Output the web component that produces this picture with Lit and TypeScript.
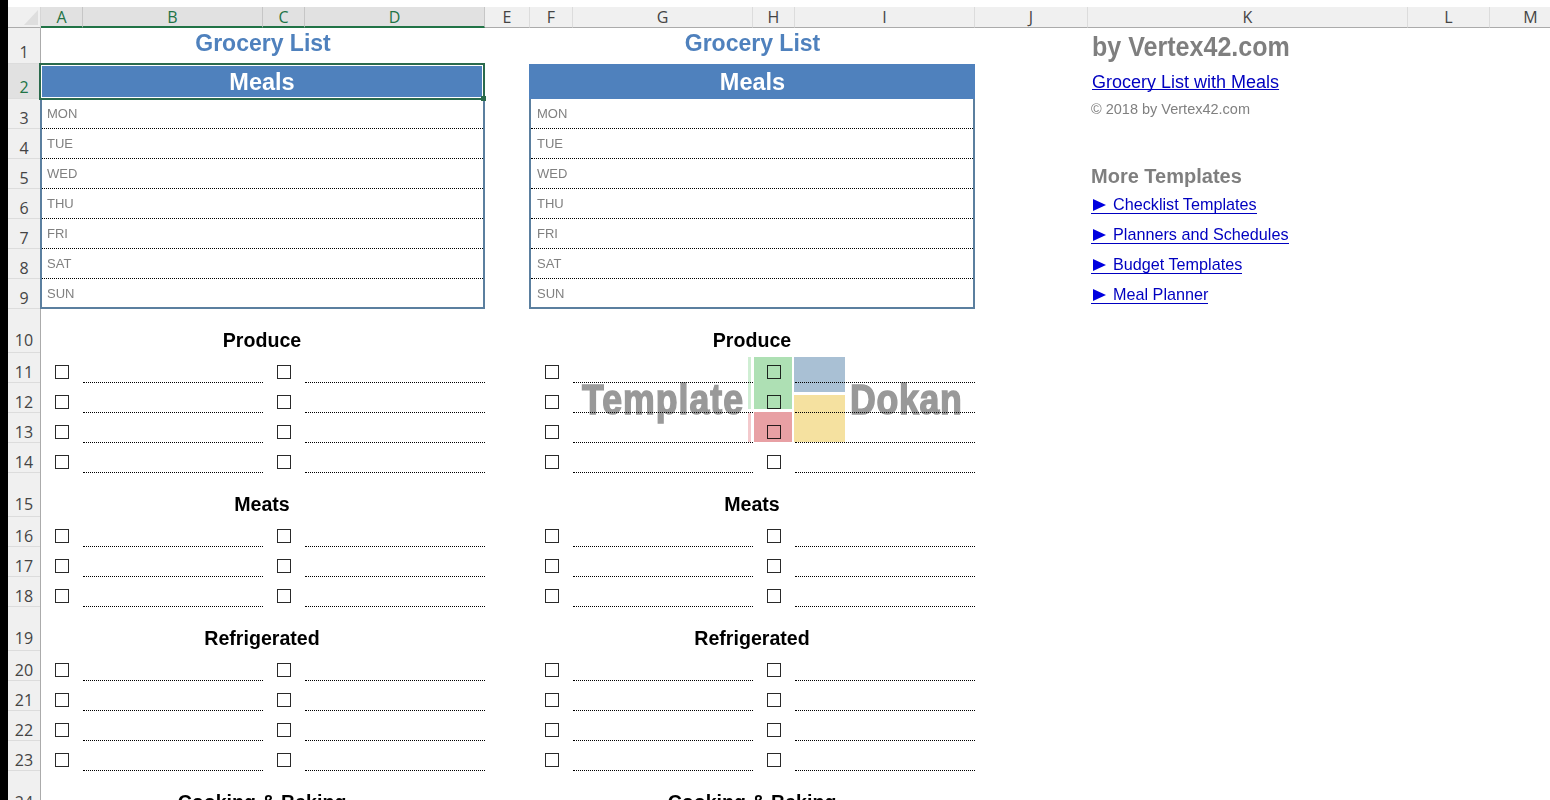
import { LitElement, html, css } from "lit";
import { customElement } from "lit/decorators.js";

const COLUMNS: [string, number, boolean][] = [
  ["A", 42, true], ["B", 180, true], ["C", 42, true], ["D", 180, true],
  ["E", 45, false], ["F", 43, false], ["G", 180, false], ["H", 42, false],
  ["I", 180, false], ["J", 113, false], ["K", 320, false], ["L", 82, false], ["M", 82, false],
];
const ROW_HEIGHTS = [36, 35, 30, 30, 30, 30, 30, 30, 30, 44, 30, 30, 30, 30, 44, 30, 30, 30, 44, 30, 30, 30, 30, 44];
const DAYS = ["MON", "TUE", "WED", "THU", "FRI", "SAT", "SUN"];
const SECTIONS: [string, number][] = [["Produce", 4], ["Meats", 3], ["Refrigerated", 4], ["Cooking & Baking", 0]];
const LINKS = ["Checklist Templates", "Planners and Schedules", "Budget Templates", "Meal Planner"];

@customElement("app-root")
export class AppRoot extends LitElement {
  static styles = css`
    :host { display: block; width: 1550px; height: 800px; overflow: hidden; background: #fff; font-family: "Liberation Sans", Arial, sans-serif; }
    .window { display: flex; height: 800px; }
    .strip { width: 8px; flex: none; background: #000; }
    .main { flex: 1; min-width: 0; padding-top: 7px; overflow: hidden; }
    .colbar { display: flex; height: 21px; }
    .corner { width: 33px; flex: none; background: #f0f0f0; border-right: 1px solid #d6d6d6; border-bottom: 1px solid #ababab; box-sizing: border-box; position: relative; }
    .corner svg { display: block; position: absolute; right: 2px; bottom: 2px; }
    .col { flex: none; box-sizing: border-box; background: #f0f0f0; border-right: 1px solid #dcdcdc; border-bottom: 1px solid #ababab; color: #444; font: 16px/20px "Open Sans", "Liberation Sans", sans-serif; text-align: center; }
    .col.sel { background: #e1e1e1; border-right-color: #c6c6c6; border-bottom: 2px solid #217346; color: #217346; }
    .body { display: flex; }
    .rowbar { width: 33px; flex: none; background: #f0f0f0; border-right: 1px solid #ababab; box-sizing: border-box; display: flex; flex-direction: column; position: relative; z-index: 0; }
    .rownum { flex: none; box-sizing: border-box; border-bottom: 1px solid #dcdcdc; color: #444; font: 16px/20px "Open Sans", "Liberation Sans", sans-serif; text-align: center; display: flex; align-items: flex-end; justify-content: center; }
    .rownum.sel { background: #e1e1e1; color: #217346; }
    .sheet { display: flex; position: relative; z-index: 1; }
    .block { flex: none; position: relative; }
    .b1 { width: 444px; --first: 42px; margin-right: 44px; }
    .b2 { width: 446px; --first: 44px; margin-right: 113px; }
    .b2 .check:first-child { padding-left: 2px; }
    .b1 .meals, .b1 .heading { padding-right: 2px; }
    .b2 .meals, .b2 .title { padding-left: 1px; }
    .b1 .days { margin-left: -1px; }
    .title { height: 36px; text-align: center; color: #4f81bd; font-weight: 700; font-size: 23px; line-height: 30px; }
    .meals { height: 35px; background: #4f81bd; color: #fff; text-align: center; font-weight: 700; font-size: 23.5px; line-height: 37px; }
    .days { box-sizing: border-box; height: 210px; border: 2px solid #5b7f9f; border-top: 0; }
    .day { box-sizing: border-box; height: 30px; border-bottom: 1px dotted #000; font-size: 13px; line-height: 29px; color: #808080; padding-left: 5px; }
    .b2 .day { padding-left: 6px; }
    .day:last-child { border-bottom: 0; height: 28px; }
    .heading { height: 44px; box-sizing: border-box; text-align: center; font-weight: 700; font-size: 19.6px; line-height: 22px; padding-top: 20px; color: #000; }
    .row { display: grid; grid-template-columns: var(--first) 180px 42px 180px; height: 30px; }
    .check { display: flex; justify-content: center; align-items: flex-end; padding-bottom: 4px; box-sizing: border-box; height: 30px; }
    .box { width: 14px; height: 14px; box-sizing: border-box; border: 1.5px solid #2a2a2a; }
    .fill { border-bottom: 1px dotted #000; box-sizing: border-box; height: 30px; }
    .selection { position: absolute; left: -2px; top: 35px; width: 446px; height: 37px; box-sizing: border-box; border: 2px solid #2a6a4c; box-shadow: inset 0 0 0 1px #fff; pointer-events: none; }
    .handle { position: absolute; right: -3px; bottom: -3px; width: 5px; height: 5px; background: #2a6a4c; }
    .panel { width: 320px; flex: none; padding-left: 4px; box-sizing: border-box; }
    .brand { height: 36px; color: #7f7f7f; font-weight: 700; font-size: 28px; line-height: 38px; transform: scaleX(0.895); transform-origin: left center; white-space: nowrap; }
    .link { display: block; height: 35px; color: #0000c0; font-size: 18px; line-height: 37px; text-decoration: underline; text-decoration-skip-ink: none; white-space: nowrap; }
    .copy { height: 60px; color: #808080; font-size: 14.5px; line-height: 20px; margin-left: -1px; }
    .more { height: 30px; color: #7f7f7f; font-weight: 700; font-size: 20px; line-height: 35px; margin-left: -1px; }
    .tpl { display: block; height: 30px; box-sizing: border-box; padding-top: 7px; margin-left: -1px; color: #0000c0; font-size: 16.2px; line-height: 17px; white-space: nowrap; }
    .tpl span { display: inline-flex; align-items: center; gap: 7px; padding-left: 2px; border-bottom: 1px solid #0000c0; }
    .tpl svg { display: block; flex: none; }
    .mark { position: absolute; left: 541px; top: 325px; width: 390px; height: 90px; mix-blend-mode: multiply; pointer-events: none; }
    .wm { position: absolute; top: 21px; color: #999; font-weight: 700; font-size: 43px; line-height: 50px; -webkit-text-stroke: 1.5px #999; letter-spacing: 1.2px; white-space: nowrap; transform: scaleX(0.83); transform-origin: left center; }
    .wm.t { left: 0; }
    .wm.d { left: 268px; letter-spacing: 0.8px; }
    .tile { position: absolute; }
    .t1 { left: 166px; top: 4px; width: 3px; height: 52px; background: #cfeed3; }
    .t2 { left: 172px; top: 4px; width: 38px; height: 52px; background: #aee0b4; }
    .t3 { left: 166px; top: 60px; width: 3px; height: 29px; background: #f3c9cc; }
    .t4 { left: 172px; top: 59px; width: 38px; height: 30px; background: #e8a0a4; }
    .t5 { left: 212px; top: 4px; width: 51px; height: 35px; background: #a9c0d4; }
    .t6 { left: 212px; top: 42px; width: 51px; height: 47px; background: #f5e1a0; }
  `;

  private block(cls: string) {
    return html`<div class="block ${cls}">
      <div class="title">Grocery List</div>
      <div class="meals">Meals</div>
      <div class="days">${DAYS.map((d) => html`<div class="day">${d}</div>`)}</div>
      ${SECTIONS.map(([name, count]) => html`
        <div class="heading">${name}</div>
        ${Array.from({ length: count }, () => html`<div class="row">
          <div class="check"><div class="box"></div></div><div class="fill"></div>
          <div class="check"><div class="box"></div></div><div class="fill"></div>
        </div>`)}`)}
      ${cls === "b1" ? html`<div class="selection"><div class="handle"></div></div>` : ""}
    </div>`;
  }

  render() {
    return html`<div class="window">
      <div class="strip"></div>
      <div class="main">
        <div class="colbar">
          <div class="corner"><svg width="14" height="15" viewBox="0 0 14 15"><path d="M14 0V15H0Z" fill="#dedede"/></svg></div>
          ${COLUMNS.map(([n, w, s]) => html`<div class="col ${s ? "sel" : ""}" style="width:${w}px">${n}</div>`)}
        </div>
        <div class="body">
          <div class="rowbar">
            ${ROW_HEIGHTS.map((h, i) => html`<div class="rownum ${i === 1 ? "sel" : ""}" style="height:${h}px;padding-bottom:${h === 44 ? 2 : h > 30 ? 1 : 0}px">${i + 1}</div>`)}
          </div>
          <div class="sheet">
            ${this.block("b1")}
            ${this.block("b2")}
            <div class="panel">
              <div class="brand">by Vertex42.com</div>
              <a class="link">Grocery List with Meals</a>
              <div class="copy">© 2018 by Vertex42.com</div>
              <div class="more">More Templates</div>
              ${LINKS.map((l) => html`<a class="tpl"><span><svg width="13" height="12" viewBox="0 0 13 12"><path d="M0 0L13 6L0 12Z" fill="#0000e0"/></svg>${l}</span></a>`)}
            </div>
            <div class="mark">
              <div class="wm t">Template</div>
              <div class="wm d">Dokan</div>
              <div class="tile t1"></div><div class="tile t2"></div><div class="tile t3"></div>
              <div class="tile t4"></div><div class="tile t5"></div><div class="tile t6"></div>
            </div>
          </div>
        </div>
      </div>
    </div>`;
  }
}
